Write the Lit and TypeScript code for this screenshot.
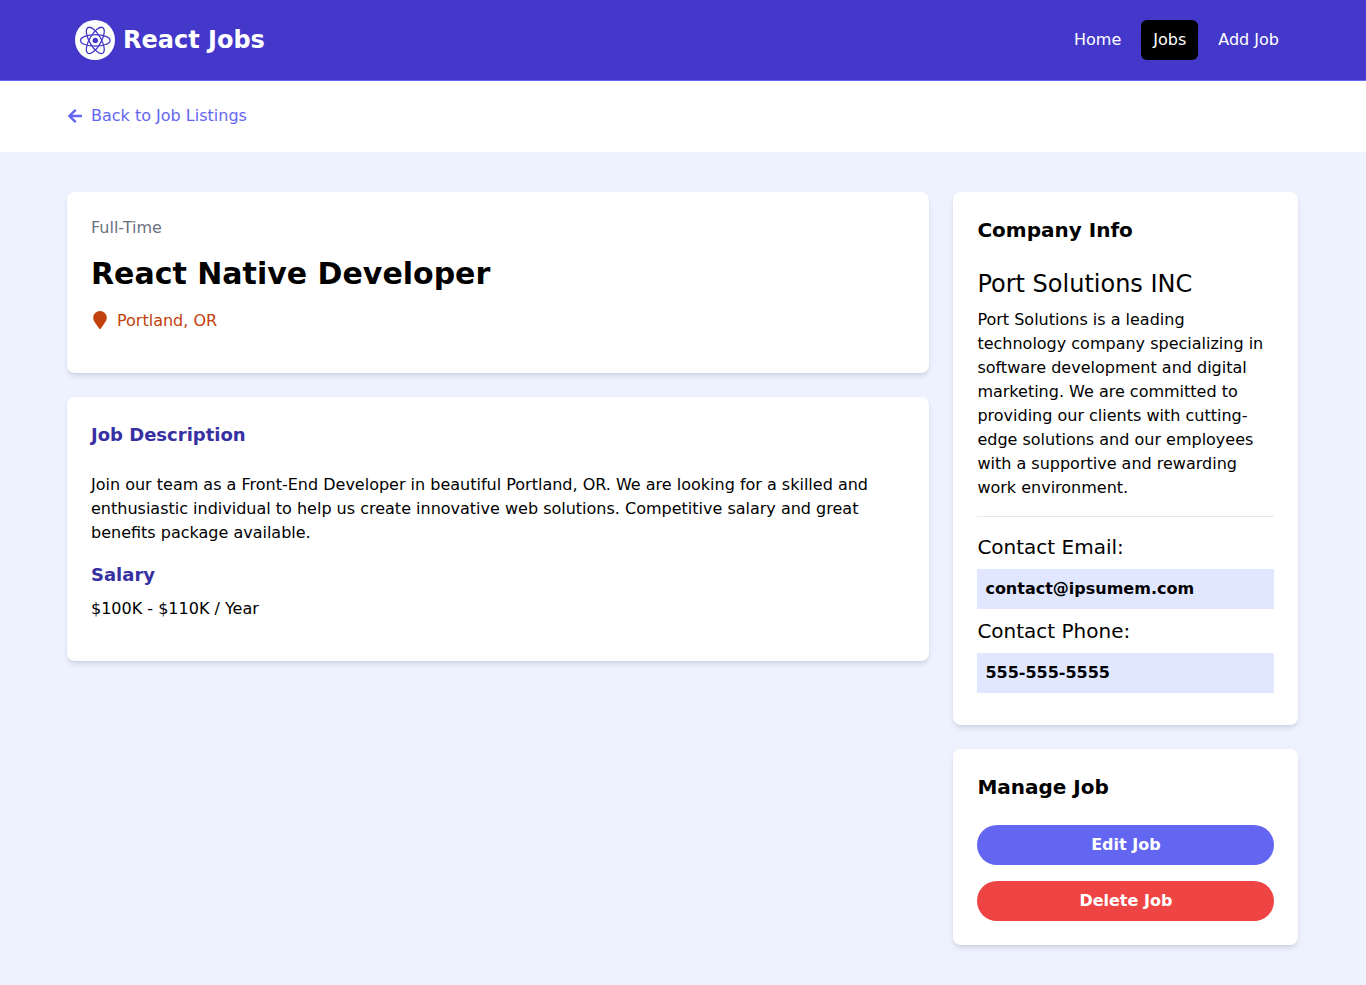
import { LitElement, html, css } from "lit";
import { customElement, property } from "lit/decorators.js";

interface Job {
  type: string;
  title: string;
  location: string;
  description: string;
  salary: string;
  company: {
    name: string;
    description: string;
    email: string;
    phone: string;
  };
}

const job: Job = {
  type: "Full-Time",
  title: "React Native Developer",
  location: "Portland, OR",
  description:
    "Join our team as a Front-End Developer in beautiful Portland, OR. We are looking for a skilled and enthusiastic individual to help us create innovative web solutions. Competitive salary and great benefits package available.",
  salary: "$100K - $110K / Year",
  company: {
    name: "Port Solutions INC",
    description:
      "Port Solutions is a leading technology company specializing in software development and digital marketing. We are committed to providing our clients with cutting-edge solutions and our employees with a supportive and rewarding work environment.",
    email: "contact@ipsumem.com",
    phone: "555-555-5555",
  },
};

const base = css`
  *,
  *::before,
  *::after {
    box-sizing: border-box;
  }
  h1,
  h2,
  h3,
  p,
  hr {
    margin: 0;
  }
  a {
    color: inherit;
    text-decoration: none;
  }
  svg {
    display: block;
    flex: none;
  }
`;

@customElement("job-navbar")
export class JobNavbar extends LitElement {
  @property() active = "Jobs";

  static styles = [
    base,
    css`
      :host {
        display: block;
        background: #4338ca;
        box-shadow: 0 1px 0 #6366f1;
        position: relative;
      }
      .inner {
        max-width: 1280px;
        margin: 0 auto;
        padding: 0 32px;
        min-height: 80px;
        display: flex;
        align-items: center;
        justify-content: space-between;
      }
      .brand {
        display: flex;
        align-items: center;
        gap: 8px;
        color: #fff;
        font-size: 24px;
        line-height: 32px;
        font-weight: 700;
      }
      .links {
        display: flex;
        gap: 8px;
      }
      .link {
        color: #fff;
        padding: 8px 12px;
        border-radius: 6px;
      }
      .link.active {
        background: #000;
      }
    `,
  ];

  render() {
    return html`
      <div class="inner">
        <a class="brand" href="#home">
          <svg width="40" height="40" viewBox="0 0 40 40" aria-hidden="true">
            <circle cx="20" cy="20" r="20" fill="#fff" />
            <g fill="none" stroke="#4338ca" stroke-width="1.3">
              <ellipse cx="20.3" cy="20.4" rx="14.8" ry="5.8" />
              <ellipse cx="20.3" cy="20.4" rx="14.8" ry="5.8" transform="rotate(60 20.3 20.4)" />
              <ellipse cx="20.3" cy="20.4" rx="14.8" ry="5.8" transform="rotate(120 20.3 20.4)" />
            </g>
            <circle cx="20.3" cy="20.4" r="2.7" fill="#4338ca" />
          </svg>
          <span>React Jobs</span>
        </a>
        <nav class="links">
          ${["Home", "Jobs", "Add Job"].map(
            (label) =>
              html`<a class="link ${label === this.active ? "active" : ""}" href="#${label.toLowerCase().replace(" ", "-")}">${label}</a>`
          )}
        </nav>
      </div>
    `;
  }
}

@customElement("app-root")
export class AppRoot extends LitElement {
  static styles = [
    base,
    css`
      :host {
        display: block;
        min-height: 100vh;
        background: #eef2ff;
        color: #000;
        font-family: "DejaVu Sans", sans-serif;
        font-size: 16px;
        line-height: 24px;
      }
      .back-bar {
        background: #fff;
      }
      .container {
        max-width: 1280px;
        margin: 0 auto;
        padding: 24px;
      }
      .back {
        display: inline-flex;
        align-items: center;
        vertical-align: top;
        gap: 8px;
        color: #6366f1;
      }
      .page {
        display: grid;
        grid-template-columns: 70% 28%;
        align-items: start;
        gap: 24px;
        padding: 40px 24px;
      }
      .column {
        display: grid;
        gap: 24px;
      }
      .card {
        background: #fff;
        border-radius: 8px;
        padding: 24px;
        box-shadow: 0 4px 6px -1px rgba(0, 0, 0, 0.1), 0 2px 4px -2px rgba(0, 0, 0, 0.1);
      }
      .type {
        color: #6b7280;
        margin-bottom: 16px;
      }
      .title {
        font-size: 30px;
        line-height: 36px;
        font-weight: 700;
        margin-bottom: 16px;
      }
      .location {
        display: flex;
        align-items: center;
        gap: 8px;
        color: #c2410c;
        line-height: 25px;
        margin-bottom: 16px;
      }
      .section {
        color: #3730a3;
        font-size: 18px;
        line-height: 28px;
        font-weight: 700;
      }
      .section.first {
        margin-bottom: 24px;
      }
      .section.next {
        margin-bottom: 8px;
      }
      .text {
        margin-bottom: 16px;
      }
      .heading {
        font-size: 20px;
        line-height: 28px;
        font-weight: 700;
        margin-bottom: 24px;
      }
      .company {
        font-size: 24px;
        line-height: 32px;
        font-weight: 400;
        margin-bottom: 8px;
      }
      .rule {
        border: 0;
        border-top: 1px solid #e5e7eb;
        margin: 16px 0;
      }
      .label {
        font-size: 20px;
        line-height: 28px;
        font-weight: 400;
      }
      .value {
        background: #e0e7ff;
        padding: 8px;
        margin: 8px 0;
        font-weight: 700;
      }
      .actions {
        display: grid;
        gap: 16px;
      }
      .button {
        display: block;
        width: 100%;
        border: 0;
        border-radius: 20px;
        padding: 8px 16px;
        color: #fff;
        font: inherit;
        font-weight: 700;
        text-align: center;
        cursor: pointer;
      }
      .edit {
        background: #6366f1;
      }
      .delete {
        background: #ef4444;
      }
      @media (max-width: 767px) {
        .page {
          grid-template-columns: 100%;
        }
      }
    `,
  ];

  render() {
    const { company } = job;
    return html`
      <job-navbar active="Jobs"></job-navbar>
      <section class="back-bar">
        <div class="container">
          <a class="back" href="#jobs">
            <svg width="16" height="16" viewBox="0 0 448 512" fill="currentColor" aria-hidden="true">
              <path
                d="M257.5 445.1l-22.2 22.2c-9.4 9.4-24.6 9.4-33.9 0L7 273c-9.4-9.4-9.4-24.6 0-33.9L201.4 44.7c9.4-9.4 24.6-9.4 33.9 0l22.2 22.2c9.5 9.5 9.3 25-.4 34.3L136.6 216H424c13.3 0 24 10.7 24 24v32c0 13.3-10.7 24-24 24H136.6l120.5 114.8c9.8 9.3 10 24.8.4 34.3z"
              />
            </svg>
            <span>Back to Job Listings</span>
          </a>
        </div>
      </section>
      <main class="container page">
        <div class="column">
          <section class="card">
            <p class="type">${job.type}</p>
            <h1 class="title">${job.title}</h1>
            <div class="location">
              <svg width="18" height="19" viewBox="0 0 384 540" fill="currentColor" aria-hidden="true">
                <path
                  d="M172.268 501.67C26.97 291.031 0 269.413 0 192 0 85.961 85.961 0 192 0s192 85.961 192 192c0 77.413-26.97 99.031-172.268 309.67-9.535 13.774-29.93 13.773-39.464 0z"
                />
              </svg>
              <p>${job.location}</p>
            </div>
          </section>
          <section class="card">
            <h3 class="section first">Job Description</h3>
            <p class="text">${job.description}</p>
            <h3 class="section next">Salary</h3>
            <p class="text">${job.salary}</p>
          </section>
        </div>
        <aside class="column">
          <section class="card">
            <h3 class="heading">Company Info</h3>
            <h2 class="company">${company.name}</h2>
            <p>${company.description}</p>
            <hr class="rule" />
            <h3 class="label">Contact Email:</h3>
            <p class="value">${company.email}</p>
            <h3 class="label">Contact Phone:</h3>
            <p class="value">${company.phone}</p>
          </section>
          <section class="card">
            <h3 class="heading">Manage Job</h3>
            <div class="actions">
              <a class="button edit" href="#edit-job">Edit Job</a>
              <button class="button delete" type="button">Delete Job</button>
            </div>
          </section>
        </aside>
      </main>
    `;
  }
}
